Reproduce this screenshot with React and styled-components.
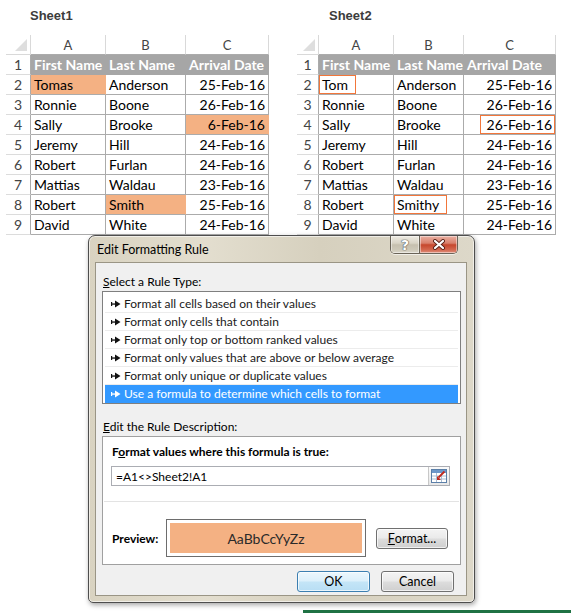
import React from 'react';
import styled, { createGlobalStyle } from 'styled-components';

const Global = createGlobalStyle`
  html, body { margin: 0; padding: 0; background: #ffffff; }
  body { width: 571px; height: 613px; overflow: hidden; font-family: Lato, "Liberation Sans", sans-serif; }
  * { box-sizing: border-box; }
`;

const Page = styled.div`
  width: 571px;
  height: 613px;
  display: flex;
  flex-direction: column;
`;

const SheetsRow = styled.div`
  display: flex;
  padding-left: 6px;
  gap: 28px;
  height: 236px;
`;

const SheetBlock = styled.div`
  display: flex;
  flex-direction: column;
`;

const SheetTitle = styled.div`
  height: 35px;
  padding-top: 8px;
  padding-left: ${(p) => p.$indent}px;
  font: bold 13px "Liberation Sans", Arial, sans-serif;
  line-height: 16px;
  color: #3c3c3c;
`;

const Grid = styled.div`
  display: grid;
  grid-template-columns: ${(p) => p.$cols};
  grid-auto-rows: 20px;
`;

const BaseCell = styled.div`
  display: flex;
  align-items: center;
  white-space: nowrap;
  overflow: hidden;
  font-family: Lato, "Liberation Sans", sans-serif;
  font-size: 14px;
`;

const Corner = styled(BaseCell)`
  position: relative;
  border-right: 1px solid #d9d9d9;
  border-bottom: 1px solid #d9d9d9;
  &::after {
    content: '';
    position: absolute;
    right: 3px;
    bottom: 3px;
    width: 0;
    height: 0;
    border-style: solid;
    border-width: 0 0 12px 12px;
    border-color: transparent transparent #dedede transparent;
  }
`;

const ColHead = styled(BaseCell)`
  justify-content: center;
  font-size: 13px;
  color: #444;
  border-right: 1px solid #d9d9d9;
  border-bottom: 1px solid #ababab;
`;

const RowHead = styled(BaseCell)`
  justify-content: center;
  color: #444;
  border-right: 1px solid #ababab;
  border-bottom: 1px solid #dcdcdc;
`;

const HeadCell = styled(BaseCell)`
  padding: 0 3px;
  background: #a6a6a6;
  color: #ffffff;
  font-weight: bold;
  border-right: 1px solid #a6a6a6;
  border-bottom: 1px solid #a6a6a6;
`;

const DataCell = styled(BaseCell)`
  padding: ${(p) => (p.$marked ? '0' : '0 3px')};
  justify-content: ${(p) => (p.$right ? 'flex-end' : 'flex-start')};
  background: ${(p) => (p.$fill ? '#f4b183' : '#ffffff')};
  color: #000;
  border-right: 1px solid ${(p) => (p.$fill ? '#f4b183' : '#ababab')};
  border-bottom: 1px solid #ababab;
`;

const Mark = styled.span`
  align-self: stretch;
  display: flex;
  align-items: center;
  border: 1px solid #f2763a;
  padding: ${(p) => (p.$right ? '0 2px 0 6px' : '0 7px 0 2px')};
`;

const sheet1 = [
  [{ t: 'Tomas', fill: true }, { t: 'Anderson' }, { t: '25-Feb-16' }],
  [{ t: 'Ronnie' }, { t: 'Boone' }, { t: '26-Feb-16' }],
  [{ t: 'Sally' }, { t: 'Brooke' }, { t: '6-Feb-16', fill: true }],
  [{ t: 'Jeremy' }, { t: 'Hill' }, { t: '24-Feb-16' }],
  [{ t: 'Robert' }, { t: 'Furlan' }, { t: '24-Feb-16' }],
  [{ t: 'Mattias' }, { t: 'Waldau' }, { t: '23-Feb-16' }],
  [{ t: 'Robert' }, { t: 'Smith', fill: true }, { t: '25-Feb-16' }],
  [{ t: 'David' }, { t: 'White' }, { t: '24-Feb-16' }],
];

const sheet2 = [
  [{ t: 'Tom', mark: true }, { t: 'Anderson' }, { t: '25-Feb-16' }],
  [{ t: 'Ronnie' }, { t: 'Boone' }, { t: '26-Feb-16' }],
  [{ t: 'Sally' }, { t: 'Brooke' }, { t: '26-Feb-16', mark: true }],
  [{ t: 'Jeremy' }, { t: 'Hill' }, { t: '24-Feb-16' }],
  [{ t: 'Robert' }, { t: 'Furlan' }, { t: '24-Feb-16' }],
  [{ t: 'Mattias' }, { t: 'Waldau' }, { t: '23-Feb-16' }],
  [{ t: 'Robert' }, { t: 'Smithy', mark: true }, { t: '25-Feb-16' }],
  [{ t: 'David' }, { t: 'White' }, { t: '24-Feb-16' }],
];

function Sheet({ title, indent, cols, rows }) {
  return (
    <SheetBlock>
      <SheetTitle $indent={indent}>{title}</SheetTitle>
      <Grid $cols={cols}>
        <Corner />
        <ColHead>A</ColHead>
        <ColHead>B</ColHead>
        <ColHead>C</ColHead>
        <RowHead>1</RowHead>
        <HeadCell>First Name</HeadCell>
        <HeadCell>Last Name</HeadCell>
        <HeadCell>Arrival Date</HeadCell>
        {rows.map((r, i) => (
          <React.Fragment key={i}>
            <RowHead>{i + 2}</RowHead>
            {r.map((c, j) => (
              <DataCell key={j} $right={j === 2} $fill={c.fill} $marked={c.mark}>
                {c.mark ? <Mark $right={j === 2}>{c.t}</Mark> : c.t}
              </DataCell>
            ))}
          </React.Fragment>
        ))}
      </Grid>
    </SheetBlock>
  );
}

/* ---------- Dialog ---------- */

const Dialog = styled.div`
  margin-left: 88px;
  width: 387px;
  height: 369px;
  display: flex;
  flex-direction: column;
  border: 1px solid #4e4e4e;
  border-radius: 7px 7px 5px 5px;
  background: linear-gradient(to right, #d9d3c1 0%, #e3decf 30%, #d6d0be 60%, #ddd8c9 100%);
  box-shadow: inset 0 0 0 1px rgba(255, 255, 255, 0.6), 1px 2px 5px rgba(0, 0, 0, 0.35);
  padding: 0 7px 6px 6px;
  font-family: Lato, "Liberation Sans", sans-serif;
  font-size: 12px;
  color: #000;
`;

const TitleBar = styled.div`
  height: 26px;
  display: flex;
  align-items: flex-start;
  justify-content: space-between;
`;

const TitleText = styled.div`
  padding-left: 2px;
  padding-top: 6px;
  font-size: 12.5px;
  line-height: 16px;
  color: #000;
`;

const CaptionGroup = styled.div`
  display: flex;
  margin-right: 9px;
  height: 18px;
  border: 1px solid #6a6458;
  border-top: none;
  border-radius: 0 0 5px 5px;
  overflow: hidden;
  box-shadow: 0 1px 0 rgba(255, 255, 255, 0.6);
`;

const CaptionButton = styled.div`
  width: ${(p) => p.$w}px;
  height: 100%;
  display: flex;
  align-items: center;
  justify-content: center;
  background: ${(p) =>
    p.$close
      ? 'linear-gradient(to bottom, #eab0a2 0%, #d9806c 42%, #c6472d 52%, #d3664d 80%, #e0907c 100%)'
      : 'linear-gradient(to bottom, #eeebe3 0%, #d9d4c6 42%, #c6c0af 52%, #cdc8b8 80%, #dcd8cb 100%)'};
  border-left: ${(p) => (p.$close ? '1px solid #6a6458' : 'none')};
  box-shadow: inset 0 0 0 1px rgba(255, 255, 255, 0.45);
  font: bold 14px "DejaVu Sans", sans-serif;
  color: #ffffff;
  text-shadow: 0 0 1px #555, 0 0 1px #555, 0 0 1px #555;
`;

const Client = styled.div`
  flex: 1;
  background: #f0f0f0;
  border: 1px solid #9a9585;
  padding: 11px 5px 0 6px;
  display: flex;
  flex-direction: column;
`;

const Label = styled.div`
  padding-left: 1px;
  line-height: 16px;
  height: 16px;
  margin-top: ${(p) => p.$mt || 0}px;
  margin-bottom: 1px;
  color: #000;
`;

const ListBox = styled.div`
  height: 113px;
  border: 1px solid #7f7f7f;
  background: #ffffff;
  padding: 3px 2px 0 2px;
  display: flex;
  flex-direction: column;
`;

const ListItem = styled.div`
  height: 18px;
  display: flex;
  align-items: center;
  gap: 3px;
  padding-left: 6px;
  border-bottom: 1px solid ${(p) => (p.$selected ? '#3399ff' : '#ececec')};
  background: ${(p) => (p.$selected ? '#3399ff' : 'transparent')};
  color: ${(p) => (p.$selected ? '#ffffff' : '#1a1a1a')};
  white-space: nowrap;
`;

const DescBox = styled.div`
  height: 129px;
  border: 1px solid #a0a0a0;
  background: #ffffff;
  display: flex;
  flex-direction: column;
`;

const FormulaSection = styled.div`
  padding: 7px 10px 0 8px;
  display: flex;
  flex-direction: column;
`;

const BoldLabel = styled.div`
  padding-left: 1px;
  font-weight: bold;
  line-height: 16px;
  height: 16px;
`;

const Input = styled.div`
  margin-top: 6px;
  height: 20px;
  border: 1px solid #abadb3;
  display: flex;
  align-items: center;
  background: #fff;
`;

const InputText = styled.div`
  flex: 1;
  padding-left: 4px;
  font-size: 12px;
  color: #000;
`;

const RefButton = styled.div`
  width: 21px;
  height: 18px;
  display: flex;
  align-items: center;
  justify-content: center;
  border-left: 1px solid #c8c8c8;
  background: linear-gradient(#fbfbfb, #e6e6e6);
`;

const Separator = styled.div`
  height: 1px;
  margin: 15px 1px 0 1px;
  background: #e3e3e3;
`;

const PreviewRow = styled.div`
  margin-top: 17px;
  padding-left: 9px;
  display: flex;
  align-items: center;
`;

const PreviewLabel = styled.div`
  width: 54px;
  font-weight: bold;
`;

const PreviewBox = styled.div`
  width: 200px;
  height: 38px;
  border: 1px solid #6d6d6d;
  padding: 3px;
  background: #fff;
`;

const PreviewFill = styled.div`
  height: 100%;
  background: #f4b183;
  display: flex;
  align-items: center;
  justify-content: center;
  font-size: 14px;
  color: #2a2a2a;
`;

const Button = styled.div`
  width: ${(p) => p.$w || 73}px;
  height: 21px;
  margin-left: ${(p) => p.$ml || 0}px;
  display: flex;
  align-items: center;
  justify-content: center;
  border: 1px solid ${(p) => (p.$default ? '#3c7fb1' : '#707070')};
  border-radius: 3px;
  background: ${(p) =>
    p.$default
      ? 'linear-gradient(to bottom, #ecf7fd 0%, #dcf0fb 48%, #c4e5f7 52%, #b8def4 100%)'
      : 'linear-gradient(to bottom, #f4f4f4 0%, #eaeaea 48%, #dddddd 52%, #cfcfcf 100%)'};
  box-shadow: inset 0 0 0 1px rgba(255, 255, 255, 0.7);
  font-size: 12.5px;
  color: #000;
`;

const ButtonsRow = styled.div`
  margin-top: 6px;
  margin-right: 7px;
  display: flex;
  justify-content: flex-end;
  gap: 11px;
`;

const GreenLine = styled.div`
  margin-top: 7px;
  margin-left: 303px;
  height: 3px;
  background: #1f7244;
`;

function Arrow({ color }) {
  return (
    <svg width="10" height="8" viewBox="0 0 10 8">
      <rect x="0" y="2" width="1.2" height="4" fill={color} />
      <rect x="0" y="3.4" width="5" height="1.3" fill={color} />
      <polygon points="4,0.6 9.5,4 4,7.4" fill={color} />
    </svg>
  );
}

function RefIcon() {
  return (
    <svg width="16" height="14" viewBox="0 0 16 14">
      <rect x="0.5" y="0.5" width="15" height="13" fill="#ffffff" stroke="#5b7fa8" />
      <rect x="1" y="1" width="14" height="3" fill="#6c97c9" />
      <path d="M1 7h14M1 10h14M5.5 4v9M10.5 4v9" stroke="#a9bcd3" strokeWidth="1" />
      <path d="M13.5 2.5 L7.5 8.5" stroke="#c0281c" strokeWidth="1.8" />
      <polygon points="6,7 6,11 10,11" fill="#c0281c" />
    </svg>
  );
}

function CloseX() {
  return (
    <svg width="14" height="11" viewBox="0 0 14 11">
      <path d="M3 2 L11 9 M11 2 L3 9" stroke="#5a2218" strokeWidth="4" strokeLinecap="round" />
      <path d="M3 2 L11 9 M11 2 L3 9" stroke="#ffffff" strokeWidth="2.2" strokeLinecap="round" />
    </svg>
  );
}

const rules = [
  'Format all cells based on their values',
  'Format only cells that contain',
  'Format only top or bottom ranked values',
  'Format only values that are above or below average',
  'Format only unique or duplicate values',
  'Use a formula to determine which cells to format',
];

export default function App() {
  return (
    <Page>
      <Global />
      <SheetsRow>
        <Sheet title="Sheet1" indent={24} cols="25px 75px 80px 83px" rows={sheet1} />
        <Sheet title="Sheet2" indent={32} cols="22px 75px 70px 92px" rows={sheet2} />
      </SheetsRow>

      <Dialog>
        <TitleBar>
          <TitleText>Edit Formatting Rule</TitleText>
          <CaptionGroup>
            <CaptionButton $w={28}>?</CaptionButton>
            <CaptionButton $w={38} $close>
              <CloseX />
            </CaptionButton>
          </CaptionGroup>
        </TitleBar>
        <Client>
          <Label>
            <u>S</u>elect a Rule Type:
          </Label>
          <ListBox>
            {rules.map((r, i) => (
              <ListItem key={i} $selected={i === 5}>
                <Arrow color={i === 5 ? '#ffffff' : '#111111'} />
                {r}
              </ListItem>
            ))}
          </ListBox>
          <Label $mt={15}>
            <u>E</u>dit the Rule Description:
          </Label>
          <DescBox>
            <FormulaSection>
              <BoldLabel>
                F<u>o</u>rmat values where this formula is true:
              </BoldLabel>
              <Input>
                <InputText>=A1&lt;&gt;Sheet2!A1</InputText>
                <RefButton>
                  <RefIcon />
                </RefButton>
              </Input>
            </FormulaSection>
            <Separator />
            <PreviewRow>
              <PreviewLabel>Preview:</PreviewLabel>
              <PreviewBox>
                <PreviewFill>AaBbCcYyZz</PreviewFill>
              </PreviewBox>
              <Button $w={72} $ml={10}>
                <u>F</u>ormat...
              </Button>
            </PreviewRow>
          </DescBox>
          <ButtonsRow>
            <Button $default>OK</Button>
            <Button>Cancel</Button>
          </ButtonsRow>
        </Client>
      </Dialog>
      <GreenLine />
    </Page>
  );
}
